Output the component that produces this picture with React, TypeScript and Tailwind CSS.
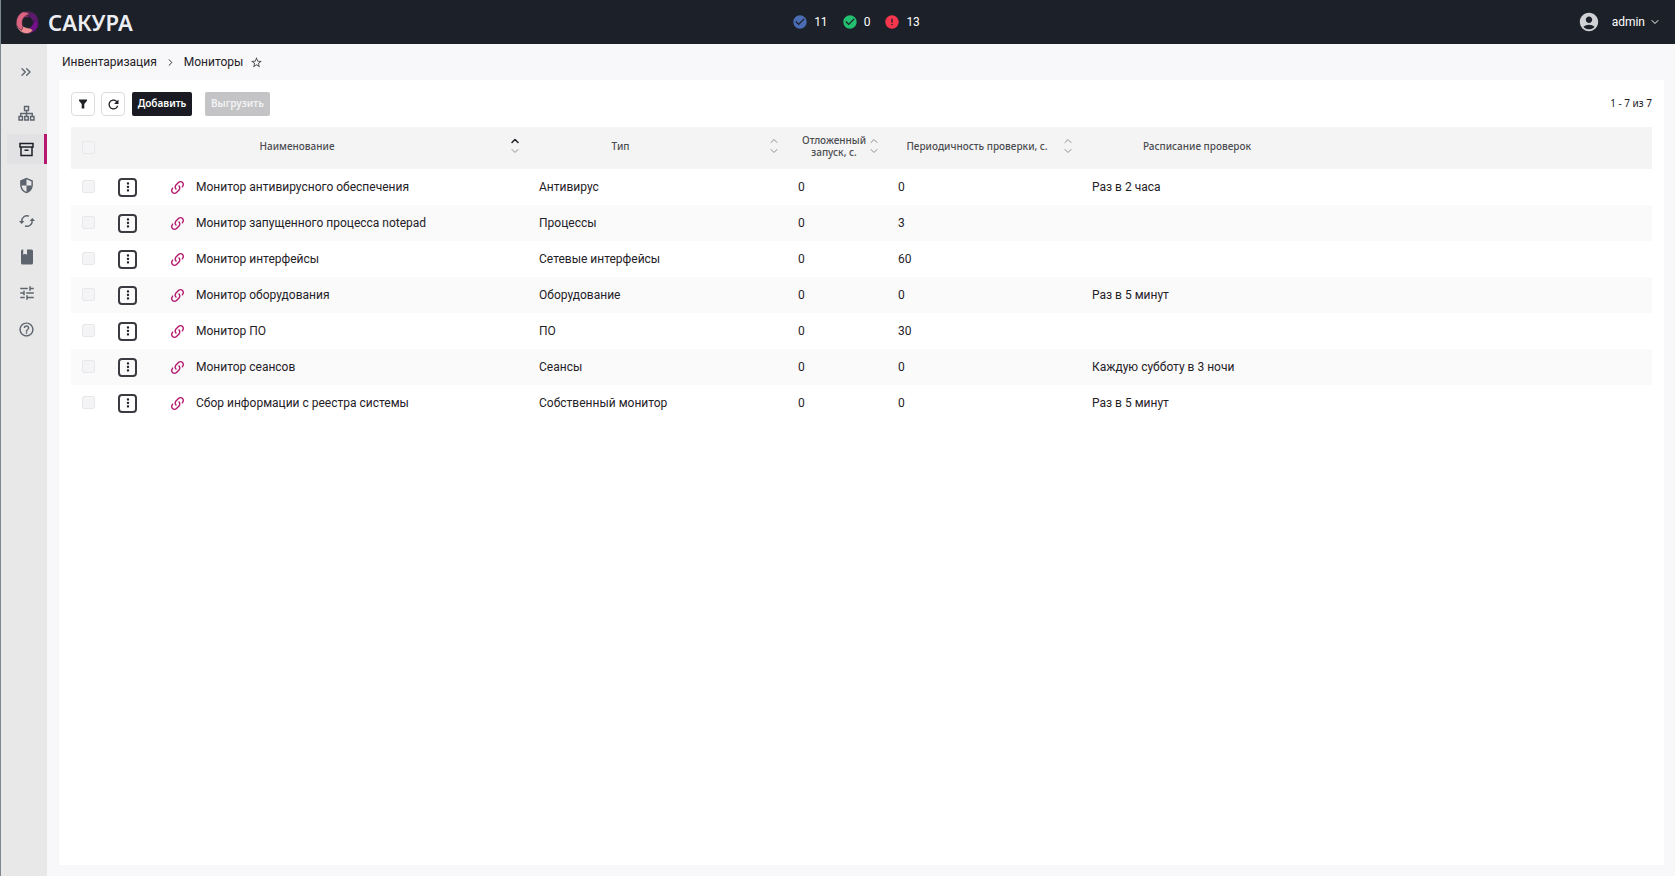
import type { ReactNode } from 'react';
import {
  MdAccountCircle,
  MdCheckCircle,
  MdError,
  MdHelpOutline,
  MdMoreVert,
  MdRefresh,
  MdSecurity,
  MdStarBorder,
  MdTune,
} from 'react-icons/md';
import { ChevronDown, ChevronRight, ChevronUp, ChevronsRight } from 'lucide-react';

interface Monitor {
  name: string;
  type: string;
  delay: number;
  period: number;
  schedule: string;
}

const monitors: Monitor[] = [
  { name: 'Монитор антивирусного обеспечения', type: 'Антивирус', delay: 0, period: 0, schedule: 'Раз в 2 часа' },
  { name: 'Монитор запущенного процесса notepad', type: 'Процессы', delay: 0, period: 3, schedule: '' },
  { name: 'Монитор интерфейсы', type: 'Сетевые интерфейсы', delay: 0, period: 60, schedule: '' },
  { name: 'Монитор оборудования', type: 'Оборудование', delay: 0, period: 0, schedule: 'Раз в 5 минут' },
  { name: 'Монитор ПО', type: 'ПО', delay: 0, period: 30, schedule: '' },
  { name: 'Монитор сеансов', type: 'Сеансы', delay: 0, period: 0, schedule: 'Каждую субботу в 3 ночи' },
  { name: 'Сбор информации с реестра системы', type: 'Собственный монитор', delay: 0, period: 0, schedule: 'Раз в 5 минут' },
];

const navItems: { label: string; icon: ReactNode; active?: boolean }[] = [
  { label: 'Структура', icon: <SitemapIcon /> },
  { label: 'Инвентаризация', icon: <ArchiveIcon />, active: true },
  { label: 'Безопасность', icon: <MdSecurity size={17} className="-scale-x-100" /> },
  { label: 'Обновления', icon: <SyncIcon /> },
  { label: 'Журналы', icon: <BookIcon /> },
  { label: 'Настройки', icon: <MdTune size={18} /> },
  { label: 'Справка', icon: <MdHelpOutline size={17} /> },
];

export default function App() {
  return (
    <div className="min-h-screen flex flex-col bg-[#f8f8fa] text-[#1f2126] text-xs font-['Roboto',sans-serif] border-l border-[#7d8790]">
      <TopBar />
      <div className="flex flex-1">
        <Sidebar />
        <main className="flex-1 min-w-0 flex flex-col pl-3 pr-[11px] pb-[11px]">
          <nav aria-label="Навигация" className="flex items-center h-9 pl-[3px]">
            <a href="#inventory">Инвентаризация</a>
            <ChevronRight size={11} className="mx-2" />
            <a href="#monitors">Мониторы</a>
            <button aria-label="В избранное" className="ml-[7px] text-[#4b4c50]">
              <MdStarBorder size={13} />
            </button>
          </nav>
          <section className="flex-1 bg-white px-3 pt-3">
            <Toolbar />
            <MonitorTable />
          </section>
        </main>
      </div>
    </div>
  );
}

function TopBar() {
  return (
    <header className="grid grid-cols-3 items-center h-11 px-3 bg-[#1c2028] text-white">
      <Logo />
      <div className="flex items-center justify-center gap-3.5 pl-9">
        <Counter icon={<MdCheckCircle size={16} className="text-[#4a6cb3]" />} value={11} />
        <Counter icon={<MdCheckCircle size={16} className="text-[#22c070]" />} value={0} />
        <Counter icon={<MdError size={16} className="text-[#f5364c]" />} value={13} />
      </div>
      <button className="flex items-center justify-self-end pr-0.5">
        <MdAccountCircle size={22} className="text-[#d0d1d4] mr-3" />
        admin
        <ChevronDown size={12} className="ml-1" />
      </button>
    </header>
  );
}

function Counter({ icon, value }: { icon: ReactNode; value: number }) {
  return (
    <span className="flex items-center gap-1.5">
      {icon}
      {value}
    </span>
  );
}

function Sidebar() {
  return (
    <aside className="w-[46px] shrink-0 bg-[#e8e8e9] text-[#5d646d] flex flex-col gap-1.5 pt-[13px]">
      <button aria-label="Развернуть" className="h-[30px] mb-[5px] flex items-center justify-center pl-1">
        <ChevronsRight size={16} />
      </button>
      {navItems.map((item) => (
        <a
          key={item.label}
          href="#"
          aria-label={item.label}
          className={
            item.active
              ? 'h-[30px] ml-1.5 pl-0.5 flex items-center justify-center bg-[#e2e1e3] text-[#1c2028] border-r-3 border-[#b5186c]'
              : 'h-[30px] ml-1.5 pr-px flex items-center justify-center'
          }
        >
          {item.icon}
        </a>
      ))}
    </aside>
  );
}

function Toolbar() {
  return (
    <div className="flex items-center mb-[11px] text-[10px] font-['Noto_Sans',sans-serif]">
      <button aria-label="Фильтр" className="size-6 rounded-sm border border-[#dcdcdf] flex items-center justify-center mr-1.5">
        <FilterIcon />
      </button>
      <button aria-label="Обновить" className="size-6 rounded-sm border border-[#dcdcdf] flex items-center justify-center mr-[7px]">
        <MdRefresh size={15} />
      </button>
      <button className="h-6 w-15 rounded-xs bg-[#1a1b22] text-white font-semibold mr-[13px]">Добавить</button>
      <button disabled className="h-6 w-[65px] rounded-xs bg-[#c4c4c6] text-[#f2f2f3] font-semibold">
        Выгрузить
      </button>
      <span className="ml-auto">1 - 7 из 7</span>
    </div>
  );
}

function MonitorTable() {
  return (
    <table className="w-full table-fixed text-left">
      <colgroup>
        <col className="w-[34px]" />
        <col className="w-[55px]" />
        <col className="w-[30px]" />
        <col className="w-[343px]" />
        <col className="w-[259px]" />
        <col className="w-[100px]" />
        <col className="w-[194px]" />
        <col />
      </colgroup>
      <thead className="bg-[#f4f4f5] text-[10px] leading-3 text-[#4b4c50] font-['Noto_Sans',sans-serif]">
        <tr className="h-[42px]">
          <th className="p-0 pl-[11px] pb-0.5">
            <CheckBox label="Выбрать все" />
          </th>
          <th colSpan={3} className="p-0 pr-3 pb-1 font-medium">
            <div className="flex items-center">
              <span className="flex-1 text-center pr-5">Наименование</span>
              <SortArrows asc />
            </div>
          </th>
          <th className="p-0 pr-3 pb-1 font-medium">
            <div className="flex items-center">
              <span className="flex-1 text-center pr-15">Тип</span>
              <SortArrows />
            </div>
          </th>
          <th className="p-0 pr-3 pb-1 font-medium">
            <div className="flex items-center">
              <span className="flex-1 text-center pl-2">Отложенный запуск, с.</span>
              <SortArrows />
            </div>
          </th>
          <th className="p-0 pr-3 pb-1 font-medium">
            <div className="flex items-center">
              <span className="flex-1 text-center">Периодичность проверки, с.</span>
              <SortArrows />
            </div>
          </th>
          <th className="p-0 pb-1 font-medium">
            <div className="w-[222px] text-center">Расписание проверок</div>
          </th>
        </tr>
      </thead>
      <tbody>
        {monitors.map((m) => (
          <tr key={m.name} className="h-9 even:bg-[#fafafb]">
            <td className="p-0 pl-[11px] pb-0.5">
              <CheckBox label={m.name} />
            </td>
            <td className="p-0 pl-[13px]">
              <button
                aria-label="Действия"
                className="size-[19px] rounded-sm border-2 border-[#3a3b40] flex items-center justify-center"
              >
                <MdMoreVert size={14} />
              </button>
            </td>
            <td className="p-0 pl-[9px]">
              <LinkIcon />
            </td>
            <td className="p-0 pl-1.5">{m.name}</td>
            <td className="p-0 pl-1.5">{m.type}</td>
            <td className="p-0 pl-1.5">{m.delay}</td>
            <td className="p-0 pl-1.5">{m.period}</td>
            <td className="p-0 pl-1.5">{m.schedule}</td>
          </tr>
        ))}
      </tbody>
    </table>
  );
}

function CheckBox({ label }: { label: string }) {
  return (
    <input
      type="checkbox"
      aria-label={label}
      className="block size-[13px] appearance-none rounded-xs border border-[#e8e8ea] bg-[#f4f4f6]"
    />
  );
}

function SortArrows({ asc = false }: { asc?: boolean }) {
  return (
    <button aria-label="Сортировать" className="w-3 flex flex-col items-center text-[#8d8e92]">
      <ChevronUp size={12} strokeWidth={asc ? 3 : 2} className={asc ? 'text-[#1f2126]' : ''} />
      <ChevronDown size={12} className="-mt-0.5" />
    </button>
  );
}

function Logo() {
  return (
    <a href="#" aria-label="Сакура" className="flex items-center gap-2 pl-0.5">
      <svg width="25" height="25" viewBox="-12.5 -12.5 25 25">
        {['#8f2c78', '#5f1a70', '#740f8c', '#f08e96', '#dc6482'].map((fill, i) => (
          <path
            key={fill}
            d="M-9-3C-9-11 1-14 8-8.500C10-6 9.500-3 8.500 0C6-6 0-7-5.500-3Z"
            fill={fill}
            stroke="#1c2028"
            strokeWidth="0.5"
            transform={`rotate(${i * 72})`}
          />
        ))}
      </svg>
      <span className="text-[22px] leading-6 font-semibold font-['Noto_Sans',sans-serif] text-[#eceef2]">САКУРА</span>
    </a>
  );
}

function LinkIcon() {
  return (
    <svg width="17" height="17" viewBox="0 0 24 24" fill="#b5186c">
      <path d="M10.590 13.410C11 13.800 11 14.440 10.590 14.830C10.200 15.220 9.560 15.220 9.170 14.830C7.220 12.880 7.220 9.710 9.170 7.760L12.710 4.220C14.660 2.270 17.830 2.270 19.780 4.220C21.730 6.170 21.730 9.340 19.780 11.290L18.290 12.780C18.300 11.960 18.170 11.140 17.890 10.360L18.360 9.880C19.540 8.710 19.540 6.810 18.360 5.640C17.190 4.460 15.290 4.460 14.120 5.640L10.590 9.170C9.410 10.340 9.410 12.240 10.590 13.410M13.410 9.170C13.800 8.780 14.440 8.780 14.830 9.170C16.780 11.120 16.780 14.290 14.830 16.240L11.290 19.780C9.340 21.730 6.170 21.730 4.220 19.780C2.270 17.830 2.270 14.660 4.220 12.710L5.710 11.220C5.700 12.040 5.830 12.860 6.110 13.650L5.640 14.120C4.460 15.290 4.460 17.190 5.640 18.360C6.810 19.540 8.710 19.540 9.880 18.360L13.410 14.830C14.590 13.660 14.590 11.760 13.410 10.590C13 10.200 13 9.560 13.410 9.170Z" />
    </svg>
  );
}

function BookIcon() {
  return (
    <svg width="18" height="18" viewBox="0 0 24 24" fill="currentColor">
      <path d="M18 22a2 2 0 0 0 2-2V4a2 2 0 0 0-2-2h-6v7L9.500 7.500 7 9V2H6a2 2 0 0 0-2 2v16a2 2 0 0 0 2 2z" />
    </svg>
  );
}

function SitemapIcon() {
  return (
    <svg width="17" height="17" viewBox="0 0 17 17" fill="none" stroke="currentColor" strokeWidth="1.4">
      <path d="M6.5 1.5h4v4h-4zM1 11.5h3.5V15H1zM6.75 11.5h3.5V15h-3.5zM12.5 11.5H16V15h-3.5zM8.5 5.5v6M2.75 11.5v-3h11.5v3" />
    </svg>
  );
}

function ArchiveIcon() {
  return (
    <svg width="15" height="15" viewBox="0 0 15 15" fill="none" stroke="currentColor" strokeWidth="1.5">
      <path d="M1 1.5h13v3.5H1zM2 5v8.500h11V5M5.500 8.200h4" />
    </svg>
  );
}

function SyncIcon() {
  return (
    <svg width="16" height="16" viewBox="0 0 16 16" fill="none" stroke="currentColor" strokeWidth="1.4">
      <path d="M2.8 8.5A5.2 5.2 0 0 1 10 3.2M13.2 7.5A5.2 5.2 0 0 1 6 12.8" />
      <path d="M0 8h5.4L2.7 11zM10.6 8H16L13.3 5z" fill="currentColor" stroke="none" />
    </svg>
  );
}

function FilterIcon() {
  return (
    <svg width="10" height="10" viewBox="0 0 10 10" fill="currentColor">
      <path d="M1 .5h8v1.2L6.3 5v4.5H3.7V5L1 1.7z" />
    </svg>
  );
}
